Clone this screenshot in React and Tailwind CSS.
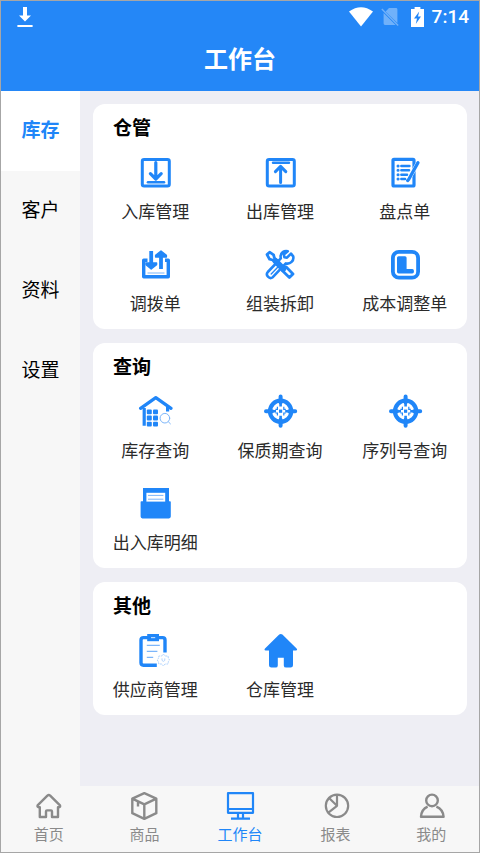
import React, { useState } from 'react';

const BLUE = '#2086f8';

// Stock-in: boxed arrow pointing down
const StockInIcon = () => (
  <g fill="none" stroke={BLUE} strokeWidth="3.2" strokeLinecap="round" strokeLinejoin="round">
    <rect x="5.3" y="4.4" width="27" height="26.6" rx="1.8" strokeWidth="3" />
    <path d="M18.8 7.5V23M13.4 18.6l5.4 5.4 5.4-5.4" />
    <path d="M11 27.3h16" strokeWidth="2.6" />
  </g>
);

// Stock-out: boxed arrow pointing up
const StockOutIcon = () => (
  <g fill="none" stroke={BLUE} strokeWidth="3" strokeLinecap="round" strokeLinejoin="round">
    <rect x="5.3" y="4.4" width="27" height="26.6" rx="1.8" />
    <path d="M18.6 12V27.6M13.4 16.6l5.2-5.2 5.2 5.2" />
    <path d="M11 7.8h16" strokeWidth="2.4" />
  </g>
);

const CheckListIcon = () => (
  <g fill="none" stroke={BLUE} strokeLinecap="round" strokeLinejoin="round">
    <rect x="6" y="4.4" width="21" height="26.6" rx="1" strokeWidth="3.2" />
    <path d="M14.4 11h8M14.4 15.3h7.6M14.4 19.7h5.6M14.4 24h3.6" strokeWidth="2.6" />
    <path d="M11 11h.1M11 15.3h.1M11 19.7h.1M11 24h.1" strokeWidth="3" />
    <path d="M30.2 9.4L23.4 21" stroke="#fff" strokeWidth="4.2" />
    <path d="M31 7.6L21.8 24.2l-1.2 1.4" strokeWidth="3.2" />
  </g>
);

const TransferIcon = () => (
  <g fill="none" stroke={BLUE} strokeWidth="3.4">
    <path d="M10.5 13.2H6.7v16.6h24.6V13.2H28" strokeLinejoin="round" />
    <path d="M14.2 4v14M24 8v14" strokeWidth="3.8" />
    <path
      d="M9 16h10.6v1.6L14.2 22 9 17.6zM18.6 10V8.4L24 4l5.4 4.4V10z"
      fill={BLUE}
      strokeWidth="1.4"
      strokeLinejoin="round"
    />
    <path d="M10.5 26h17" stroke="#8fc1fb" strokeWidth="1.2" />
  </g>
);

const ToolsIcon = () => (
  <g fill="none" stroke={BLUE} strokeWidth="2.8" strokeLinejoin="round" strokeLinecap="round">
    <path d="M5 7.6L7.6 5.2l4 2.6.8 3.2L22 20.4l2-.6 7 7.2-3.6 3.6-7.2-7 .4-2.2L10.6 13l-3-.8z" />
    <path d="M29 6.6l-4 4-2.6-.4-.6-2.8 4-3.2c-3.6-1-7.4 1.6-7.2 5.6l.2 1.6L5.8 25c-2.6 3 1.4 7.8 5 5.2l13-13.8c4.6 1.2 8.4-2.8 7.4-7z" fill="#fff" strokeWidth="2.6" />
    <path d="M9.2 27l7-7.2" strokeWidth="1.4" />
    <path d="M13.6 14.2l7.6 7.6" strokeWidth="6" />
  </g>
);

const CostIcon = () => (
  <g>
    <rect x="5.9" y="4.9" width="25.2" height="25.8" rx="6" fill="none" stroke={BLUE} strokeWidth="3.8" />
    <path d="M11.6 9.2H18q1.6 0 1.6 1.6V22h5.6q1.8 0 1.8 2.2t-1.8 2.2H11.600q-1.6 0-1.6-1.6v-14q0-1.6 1.6-1.6z" fill={BLUE} />
  </g>
);

const StockSearchIcon = () => (
  <g fill="none" stroke={BLUE} strokeLinecap="round" strokeLinejoin="round">
    <path d="M3.6 14.4L18.8 3.6 34 14.4" strokeWidth="3.2" />
    <path d="M7.2 14v17.8M30.6 13v4.6" strokeWidth="3.2" strokeLinecap="butt" />
    <g fill={BLUE} stroke="none">
      <rect x="9.8" y="15.5" width="5" height="4.8" rx="1" />
      <rect x="16" y="15.5" width="5" height="4.8" rx="1" />
      <rect x="9.8" y="21.6" width="5" height="4.8" rx="1" />
      <rect x="16" y="21.6" width="5" height="4.8" rx="1" />
      <rect x="9.8" y="27.7" width="5" height="4.8" rx="1" />
      <rect x="16" y="27.7" width="5" height="4.8" rx="1" />
    </g>
    <circle cx="27.9" cy="24.2" r="4.8" stroke="#7db6fa" strokeWidth="1" />
    <path d="M31.4 27.8l2 2" stroke="#7db6fa" strokeWidth="1" />
  </g>
);

const TargetIcon = () => (
  <g fill="none" stroke={BLUE}>
    <circle cx="18.6" cy="17.2" r="10.6" strokeWidth="4.2" />
    <path d="M18.6 2.6v6M18.6 25.8v6M4 17.2h6M27.2 17.2h6" strokeWidth="4" strokeLinecap="round" />
    <path d="M18.6 8v4.6M18.6 21.8v4.6M9.4 17.2H14M23.2 17.2h4.6" strokeWidth="2.6" />
    <path d="M15.4 12.8v2.6h-2M21.8 12.8v2.6h2M15.4 21.600V19h-2M21.8 21.600V19h2" strokeWidth="1.2" />
    <rect x="17" y="15.6" width="3.2" height="3.2" fill={BLUE} stroke="none" />
  </g>
);

const DrawerIcon = () => (
  <g>
    <path d="M6 2h26v13.2h1q.8 0 .8.8v14.6q0 1.8-1.8 1.8H5.4q-1.8 0-1.8-1.8V16q0-.8.8-.8H6z" fill={BLUE} />
    <rect x="9.4" y="6.8" width="18.8" height="8.8" fill="#fff" />
    <path d="M11 9.4h15.4M11 13.2h15.4" stroke="#7db6fa" strokeWidth="1" />
  </g>
);

const SupplierIcon = () => (
  <g fill="none" stroke={BLUE}>
    <path d="M11 4.6H6.4q-2.4 0-2.4 2.4v22.8q0 2.4 2.4 2.4h13.4M21 4.6h4.6q2.4 0 2.4 2.4v12.6" strokeWidth="3.4" />
    <rect x="10.2" y="1" width="11.8" height="7.2" fill={BLUE} stroke="none" />
    <path d="M14 4.6h4.2" stroke="#b9d8fd" strokeWidth="1.2" />
    <path d="M9.8 12.4h13M9.8 18.4h10.6M9.8 24.4h6.4" stroke="#7db6fa" strokeWidth="1.4" />
    <path d="M26.4 21l1.6 2h3l.4 2.4 1.2 1.6-1.2 1.6-.4 2.4h-3l-1.6 2-1.6-2h-3l-.4-2.4-1.2-1.6 1.2-1.6.4-2.4h3z" stroke="#b4d5fd" strokeWidth="1" strokeDasharray="2 .8" />
    <path d="M25 25.4v2q1.4 2 2.8 0v-2" stroke="#b4d5fd" strokeWidth="1" />
  </g>
);

const WarehouseIcon = () => (
  <path
    d="M17.2 1.6q1.6-1.4 3.2 0l14.2 13.8q1.4 1.8-.8 2.2H31v14.6q0 2.4-2.4 2.4h-4.4q-2.4 0-2.4-2.2v-7.6h-6v7.6q0 2.2-2.2 2.2H9.4Q7 34.6 7 32.2V17.6H3.8q-2.2-.4-.8-2.2z"
    fill={BLUE}
  />
);

// Menu groups shown in the content area
const groups = [
  {
    title: '仓管',
    items: [
      { name: '入库管理', Icon: StockInIcon },
      { name: '出库管理', Icon: StockOutIcon },
      { name: '盘点单', Icon: CheckListIcon },
      { name: '调拨单', Icon: TransferIcon },
      { name: '组装拆卸', Icon: ToolsIcon },
      { name: '成本调整单', Icon: CostIcon },
    ],
  },
  {
    title: '查询',
    items: [
      { name: '库存查询', Icon: StockSearchIcon },
      { name: '保质期查询', Icon: TargetIcon },
      { name: '序列号查询', Icon: TargetIcon },
      { name: '出入库明细', Icon: DrawerIcon },
    ],
  },
  {
    title: '其他',
    items: [
      { name: '供应商管理', Icon: SupplierIcon },
      { name: '仓库管理', Icon: WarehouseIcon },
    ],
  },
];

const categories = ['库存', '客户', '资料', '设置'];

// Bottom tabs, strokes follow the text colour
const tabs = [
  {
    name: '首页',
    icon: (
      <path
        d="M4.6 15.4L14.4 5.6q1.4-1.2 2.8 0L27 15.4q.6 1.6-1 1.8h-1V27h-6v-5.6q0-1-1-1h-4q-1 0-1 1V27H6.8v-9.8h-1q-1.8-.2-1.2-1.8z"
        strokeWidth="2.4"
      />
    ),
  },
  {
    name: '商品',
    icon: (
      <path
        d="M16.3 3.2l12 5.4v14.6l-12 5.6-12-5.6V8.6zM4.3 8.6l12 5.8 12-5.8M16.3 14.4v14.4M10 11.6v5"
        strokeWidth="2.4"
      />
    ),
  },
  {
    name: '工作台',
    icon: <path d="M4 3.2h25v19.6H4zM4 19h25M14 23v5.6M19 23v5.6M7 28.6h19" strokeWidth="2.2" />,
  },
  {
    name: '报表',
    icon: (
      <g strokeWidth="2.2">
        <circle cx="17" cy="15.8" r="11.2" />
        <path d="M17 4.6v11.2l-8.2-8M17 15.8l-8.6 6.8" />
      </g>
    ),
  },
  {
    name: '我的',
    icon: (
      <g strokeWidth="2.4">
        <circle cx="17" cy="10.4" r="5.8" />
        <path d="M12.6 16.6Q6.4 19.2 6 26.8h22.6q-.6-7.600-7.200-10.200" />
      </g>
    ),
  },
];

const StatusBar = () => (
  <div className="flex h-8 items-center justify-between pl-4 pr-2.5">
    <svg width="16" height="20" viewBox="0 0 16 20" fill="#fff" aria-hidden="true">
      <path d="M6 0h4v8.4h4L8 14.6 2 8.4h4zM.4 18h15.2v2H.4z" />
    </svg>
    <div className="flex items-center">
      <svg width="24" height="20" viewBox="0 0 24 20" fill="#fff" aria-hidden="true">
        <path d="M0 4.6Q12-4 24 4.6L12 19.4z" />
      </svg>
      <svg className="ml-2" width="18" height="20" viewBox="0 0 18 20" aria-hidden="true">
        <path d="M8 1h7q1.4 0 1.4 1.4V16L4.6 4.4zM2.6 6l12 12H4q-1.4 0-1.4-1.4z" fill="#fff" opacity=".35" />
        <path d="M.8 2l16.4 16.6" stroke="#fff" strokeWidth="1.4" opacity=".35" />
      </svg>
      <svg className="ml-3" width="13" height="20" viewBox="0 0 13 20" aria-hidden="true">
        <path d="M3.6 0h5.8v2H13v18H0V2h3.6z" fill="#fff" />
        <path d="M8.2 4.4L3 11.6h3L4.8 17 10 9.6H7z" fill={BLUE} />
      </svg>
      <span className="ml-2 font-['Roboto'] text-[19px] leading-6 font-medium text-white">7:14</span>
    </div>
  </div>
);

const MenuCard = ({ group }) => (
  <section className="rounded-xl bg-white pt-[11px] pb-3.5">
    <h2 className="pl-5 text-[19px] leading-6 font-bold text-black">{group.title}</h2>
    <div className="mt-4 grid grid-cols-3 gap-y-6">
      {group.items.map(({ name, Icon }) => (
        <button key={name} type="button" className="flex flex-col items-center gap-2">
          <svg width="36" height="36" viewBox="0 0 36 36" aria-hidden="true">
            <Icon />
          </svg>
          <span className="text-[17px] leading-6 whitespace-nowrap text-[#2b2b2b]">{name}</span>
        </button>
      ))}
    </div>
  </section>
);

const App = () => {
  const [category, setCategory] = useState('库存');
  const [tab, setTab] = useState('工作台');

  return (
    <div className="flex min-h-screen flex-col border border-[#a6a6a6] bg-[#eeeef4] font-['Noto_Sans_CJK_SC',sans-serif]">
      {/* Header */}
      <header className="bg-[#2487f7]">
        <StatusBar />
        <h1 className="pt-[9px] pb-[17px] text-center text-2xl font-bold text-white">工作台</h1>
      </header>

      <div className="flex flex-1">
        {/* Categories */}
        <aside className="w-[79px] shrink-0 bg-[#f7f7f7]">
          {categories.map((name) => (
            <button
              key={name}
              type="button"
              onClick={() => setCategory(name)}
              className={`block h-20 w-full pb-1 text-[19px] ${
                category === name ? 'bg-white font-bold text-[#2086f8]' : 'text-black'
              }`}
            >
              {name}
            </button>
          ))}
        </aside>

        {/* Cards */}
        <main className="flex flex-1 flex-col gap-3.5 py-[13px] pr-3 pl-[13px]">
          {groups.map((group) => (
            <MenuCard key={group.title} group={group} />
          ))}
        </main>
      </div>

      {/* Bottom tabs */}
      <nav className="grid grid-cols-5 bg-[#f7f7f7] pt-1 pb-2">
        {tabs.map(({ name, icon }) => (
          <button
            key={name}
            type="button"
            onClick={() => setTab(name)}
            className={`flex flex-col items-center gap-0.5 ${
              tab === name ? 'text-[#2086f8]' : 'text-[#8a8a8a]'
            }`}
          >
            <svg width="32" height="32" viewBox="0 0 32 32" fill="none" stroke="currentColor" strokeLinejoin="round" aria-hidden="true">
              {icon}
            </svg>
            <span className="text-[15px] leading-5">{name}</span>
          </button>
        ))}
      </nav>
    </div>
  );
};

export default App;
